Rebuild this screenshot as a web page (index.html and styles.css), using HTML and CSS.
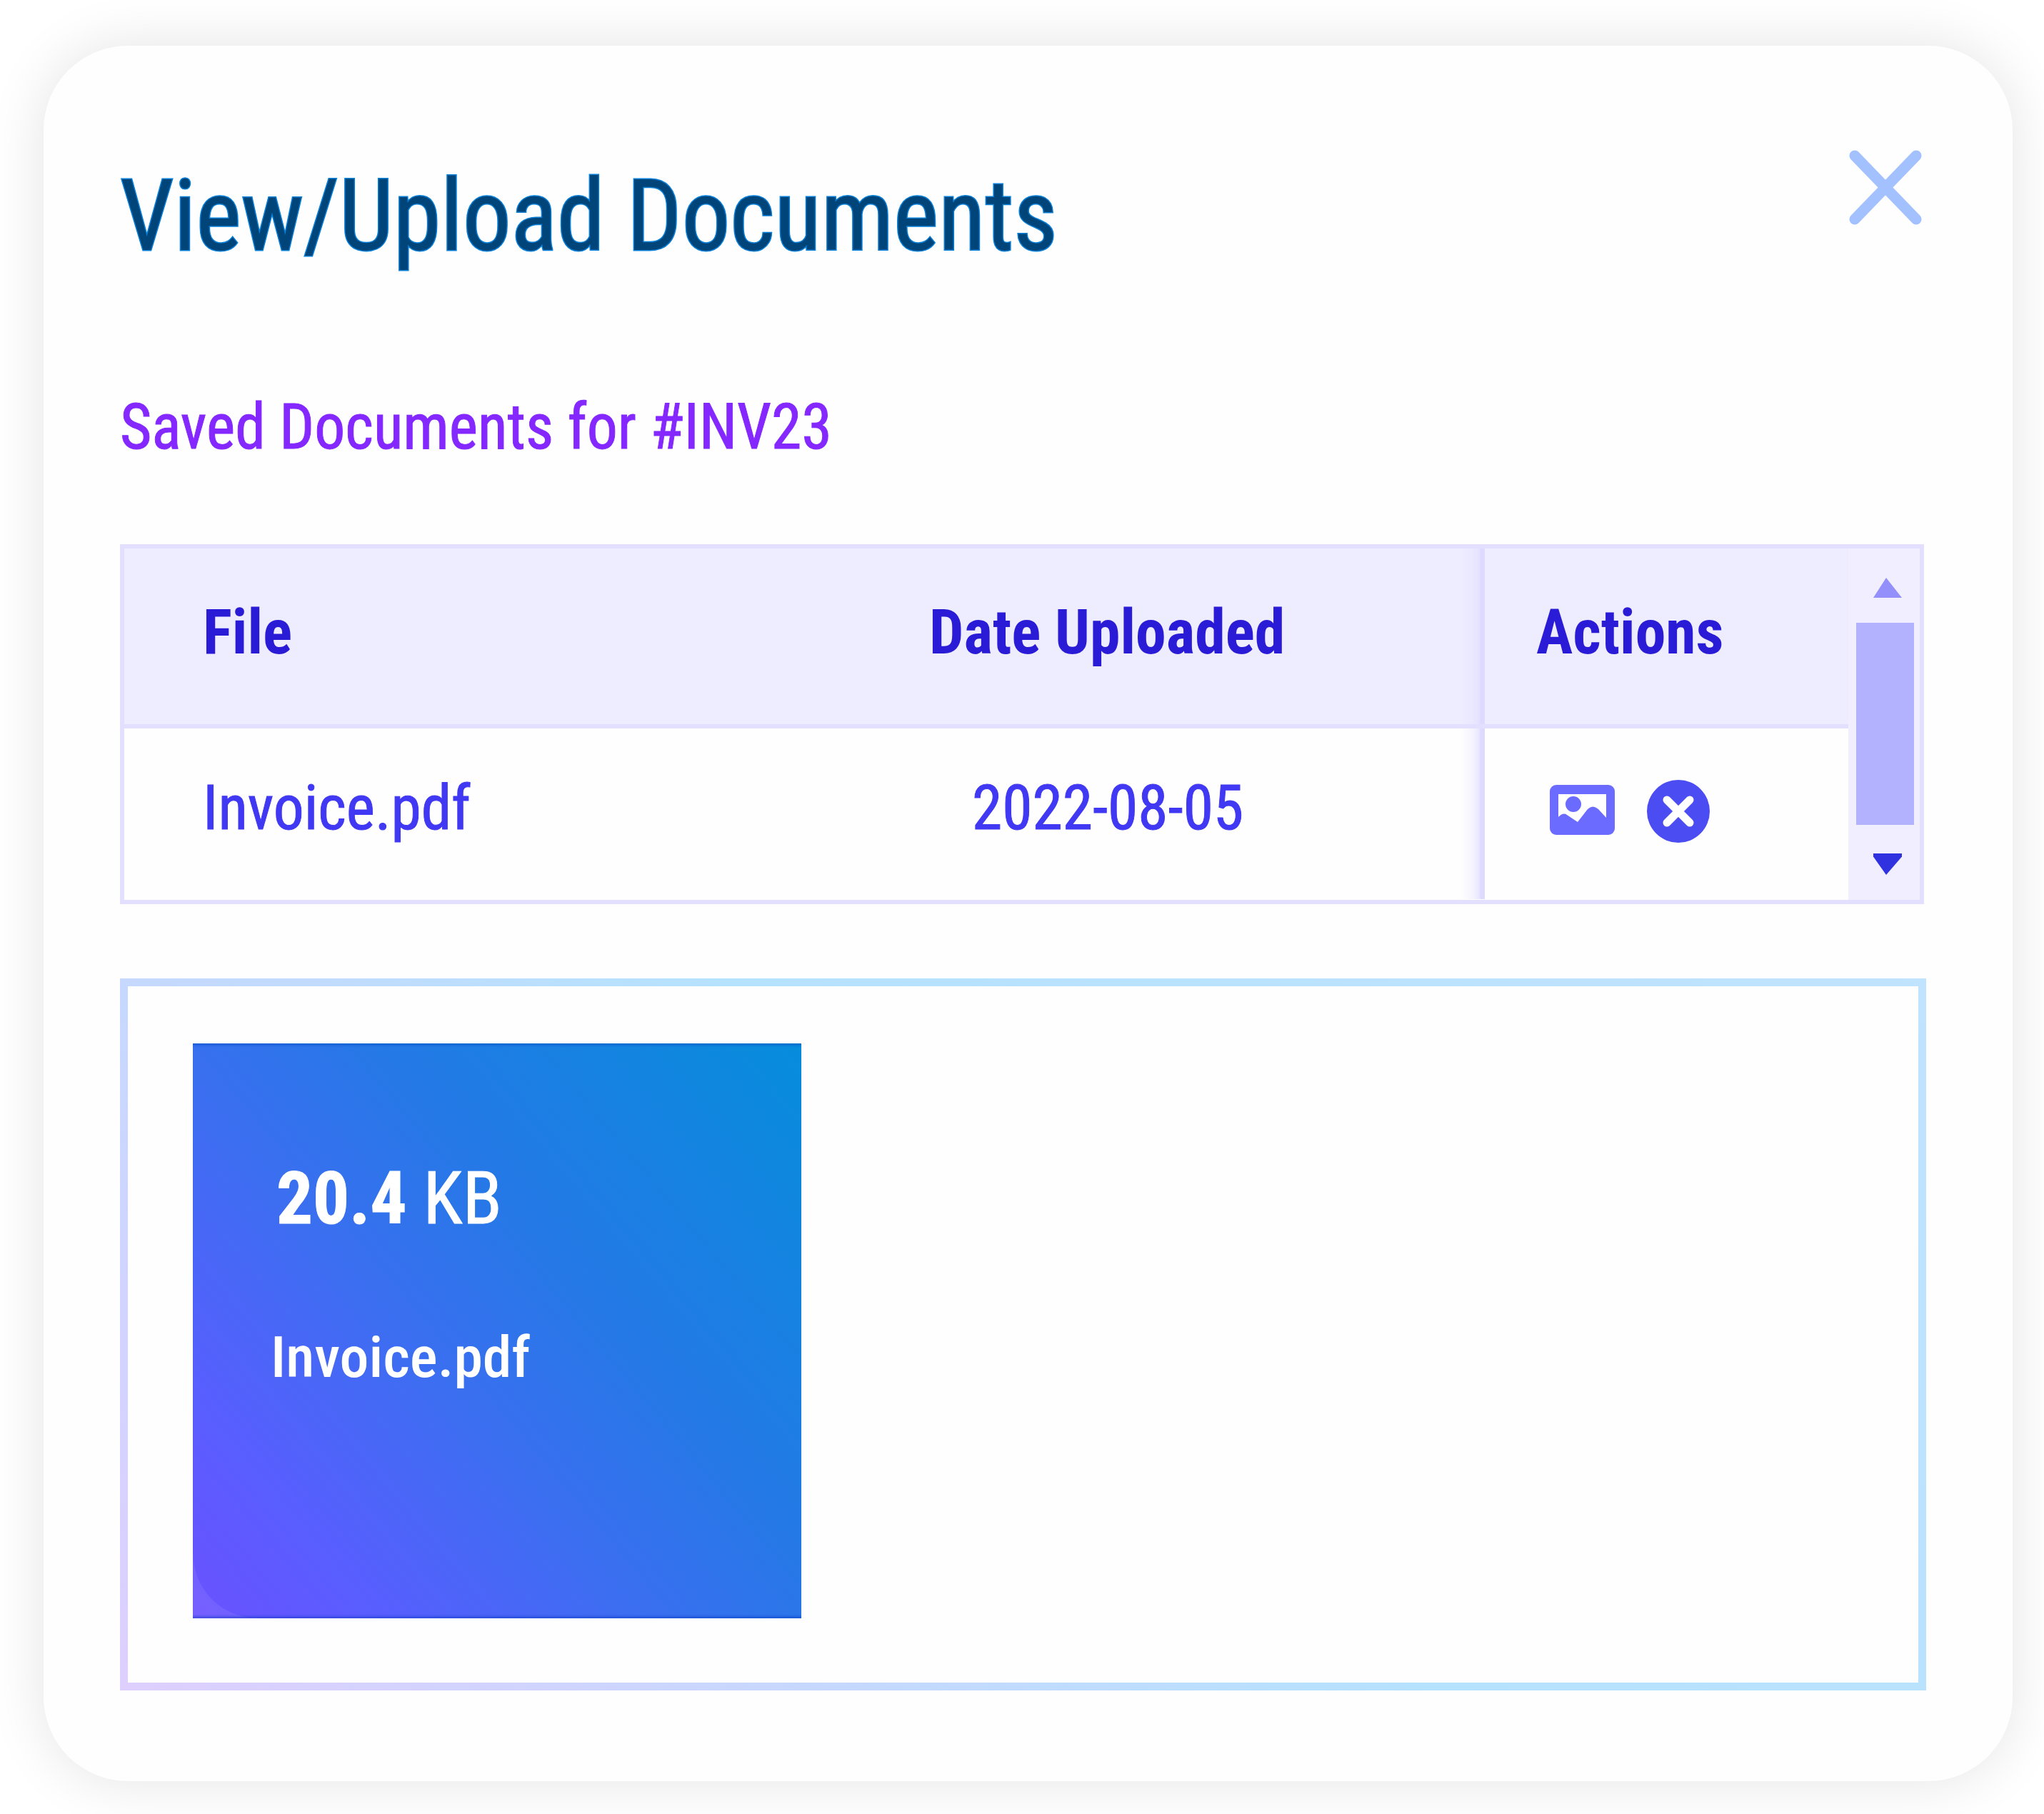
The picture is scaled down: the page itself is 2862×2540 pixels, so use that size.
FILE: index.html
```html
<!DOCTYPE html>
<html lang="en">
  <head>
    <meta charset="UTF-8" />
    <meta name="viewport" content="width=device-width, initial-scale=1.0" />
    <title>View/Upload Documents</title>
    <link rel="stylesheet" href="styles.css">
  </head>
  <body>
    <div class="modal">
      <div class="modal-header">
        <h1><span class="text">View/Upload Documents</span></h1>
        <button class="close" title="Close">
          <svg viewBox="0 0 104 107"><path d="M9 9L95 98M95 9L9 98" /></svg>
        </button>
      </div>

      <h2><span class="text">Saved Documents for #INV23</span></h2>

      <div class="table-wrapper">
        <div class="table">
          <div class="row head">
            <div class="cell file"><span class="text">File</span></div>
            <div class="cell date"><span class="text">Date Uploaded</span></div>
            <div class="cell actions"><span class="text">Actions</span></div>
          </div>
          <div class="row">
            <div class="cell file"><span class="text">Invoice.pdf</span></div>
            <div class="cell date"><span class="text">2022-08-05</span></div>
            <div class="cell actions">
              <svg class="icon-image" viewBox="0 0 91 70">
                <rect width="91" height="70" rx="9" fill="#6c6bff" />
                <path d="M12 13H79V46L68 34Q60 27 53 34L39 52L24 42Q19 38 12 45Z" fill="#fff" />
                <circle cx="33" cy="27" r="11" fill="#6c6bff" />
              </svg>
              <svg class="icon-delete" viewBox="0 0 88 88">
                <circle cx="44" cy="44" r="44" fill="#4b4df3" />
                <path d="M28 28L60 60M60 28L28 60" />
              </svg>
            </div>
          </div>
        </div>
        <div class="scrollbar">
          <div class="arrow up"></div>
          <div class="thumb"></div>
          <div class="arrow down"></div>
        </div>
      </div>

      <div class="dropzone">
        <div class="tile">
          <p class="size"><span class="text"><b>20.4</b> KB</span></p>
          <p class="name"><span class="text">Invoice.pdf</span></p>
        </div>
      </div>
    </div>
  </body>
</html>
```

FILE: styles.css
```css
* {
  margin: 0;
  padding: 0;
  box-sizing: border-box;
}

body {
  font-family: "Roboto Condensed", "Roboto", sans-serif;
  font-stretch: 75%;
  background: #ffffff;
  width: 2862px;
  height: 2540px;
  padding: 64px 44px 46px 61px;
  overflow: hidden;
}

.modal {
  height: 2430px;
  padding: 127px 120px 127px 107px;
  background: #fefefe;
  border-radius: 118px;
  box-shadow: 0 0 80px rgba(0, 0, 0, 0.11);
}

.text {
  display: inline-block;
  white-space: nowrap;
  transform: scaleX(0.972);
  transform-origin: left center;
}

.modal-header {
  display: flex;
  justify-content: space-between;
  align-items: flex-start;
  height: 297px;
}

h1 {
  color: #00457a;
  font-size: 140px;
  font-weight: 400;
  line-height: 168px;
  padding-top: 27px;
  -webkit-text-stroke: 3px #0880d8;
  paint-order: stroke fill;
}

h1 .text {
  transform: scaleX(0.962);
}

.close {
  width: 104px;
  height: 107px;
  margin: 18px 6px 0 0;
  background: none;
  border: none;
}

.close svg {
  display: block;
  fill: none;
  stroke: #a4c1ff;
  stroke-width: 15;
  stroke-linecap: round;
}

h2 {
  color: #8428ff;
  font-size: 89px;
  font-weight: 400;
  line-height: 110px;
  height: 220px;
  padding-top: 55px;
  -webkit-text-stroke: 1px #8428ff;
}

h2 .text {
  transform: scaleX(0.963);
}

.table-wrapper {
  display: flex;
  width: 2526px;
  height: 504px;
  margin-top: 54px;
  border: 6px solid #e2dfff;
}

.table {
  width: 2414px;
}

.row {
  display: flex;
  height: 239px;
  color: #4038f2;
  font-size: 88px;
  -webkit-text-stroke: 1px #4038f2;
}

.row.head {
  height: 252px;
  color: #2a1bd6;
  background: #eeecff;
  border-bottom: 6px solid #e2dfff;
  font-weight: 700;
  -webkit-text-stroke: 0;
}

.cell {
  display: flex;
  align-items: center;
  padding-bottom: 18px;
}

.head .cell {
  padding-bottom: 14px;
}

.head .text {
  transform: scaleX(0.975);
}

.file {
  width: 930px;
  padding-left: 110px;
}

.date {
  width: 975px;
  padding-left: 197px;
  background: linear-gradient(to left, #dedaff 6px, rgba(226, 223, 255, 0.75) 8px, rgba(226, 223, 255, 0.3) 18px, rgba(226, 223, 255, 0) 34px);
}

.row:not(.head) .date {
  padding-left: 257px;
}

.actions {
  flex: 1;
  padding-left: 72px;
}

.row:not(.head) .actions {
  gap: 45px;
  padding-left: 91px;
  padding-bottom: 12px;
}

.icon-image {
  width: 91px;
  height: 70px;
}

.icon-delete {
  width: 88px;
  height: 88px;
  margin-top: 5px;
  stroke: #ffffff;
  stroke-width: 11;
  stroke-linecap: round;
}

.icon-delete circle {
  stroke: none;
}

.scrollbar {
  flex: 1;
  background: #f0eeff;
}

.arrow {
  width: 40px;
  height: 28px;
  margin-left: 35px;
  background: #9490fb;
  clip-path: polygon(45% 0, 100% 100%, 0 100%);
}

.arrow.up {
  margin-top: 41px;
}

.arrow.down {
  height: 30px;
  background: #2f32de;
  clip-path: polygon(0 0, 100% 0, 100% 15%, 45% 100%, 0 15%);
}

.thumb {
  width: 81px;
  height: 283px;
  margin: 35px 0 40px 11px;
  background: #b2b2ff;
}

.dropzone {
  width: 2529px;
  height: 997px;
  margin-top: 104px;
  padding: 80px 91px;
  border: 11px solid transparent;
  background: linear-gradient(#fefefe, #fefefe) padding-box,
    linear-gradient(45deg, #decfff, #c6d8ff 28%, #b5e2ff 52%, #c0e3ff) border-box;
}

.tile {
  width: 852px;
  height: 805px;
  padding: 152px 0 0 109px;
  color: #ffffff;
  background: radial-gradient(circle at 100% 0, transparent 89px, rgba(255, 255, 255, 0.08) 90px) left bottom / 90px 90px no-repeat,
    linear-gradient(50deg, #6a52ff, #5b5cff 15%, #3a6ff0 42%, #2479e6 62%, #068ddc);
  box-shadow: inset 0 5px 3px -2px rgba(0, 70, 190, 0.4),
    inset 0 -5px 3px -2px rgba(0, 50, 190, 0.4);
}

.size {
  padding-left: 8px;
  font-size: 102px;
  line-height: 130px;
  -webkit-text-stroke: 1px #ffffff;
}

.size .text {
  transform: scaleX(0.99);
}

.name {
  margin-top: 108px;
  font-size: 79px;
  font-weight: 500;
  line-height: 100px;
}

.name .text {
  transform: scaleX(1.035);
}
```
